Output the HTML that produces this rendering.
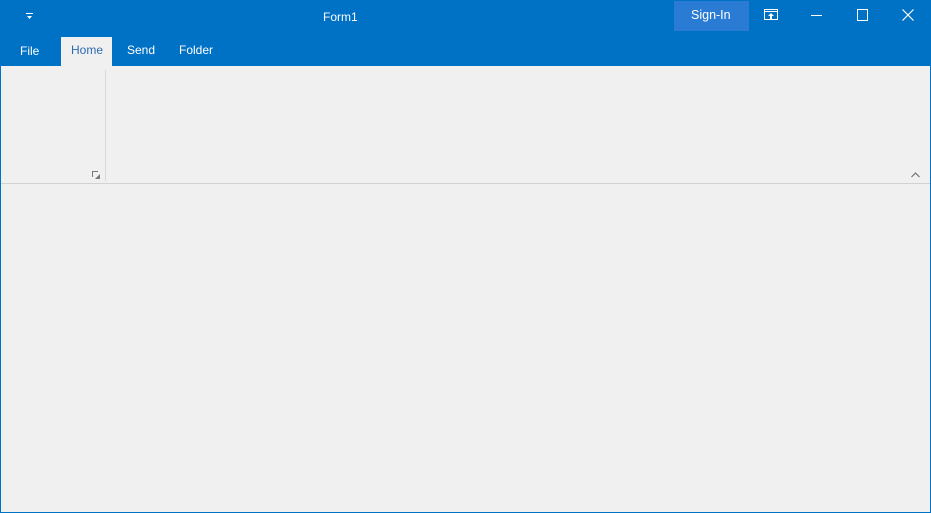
<!DOCTYPE html><html><head><style>
body{margin:0;width:931px;height:513px;overflow:hidden;background:#f0f0f0;font-family:"Segoe UI","Liberation Sans",sans-serif;position:relative}
.t{position:absolute;left:0;top:0;width:931px;height:66px;background:#0072c6;color:#fff}
.a{position:absolute;font-size:12px}
</style></head><body>
<div class="t">
<svg style="position:absolute;left:26px;top:12px" width="8" height="8"><rect x="0" y="1" width="7" height="1" fill="#fff"/><path d="M1 4h5l-2.5 3z" fill="#fff"/></svg>
<div class="a" style="left:323px;top:10px">Form1</div>
<div style="position:absolute;left:674px;top:1px;width:75px;height:30px;background:#2a7bd3"></div>
<div class="a" style="left:691px;top:8px;font-size:12.5px">Sign-In</div>
<svg style="position:absolute;left:764px;top:9px" width="15" height="12"><rect x="0.5" y="0.5" width="13" height="10" fill="none" stroke="#fff"/><line x1="1" y1="2.5" x2="13" y2="2.5" stroke="#fff"/><path d="M7 4l-3 3h2v3h2v-3h2z" fill="#fff"/></svg>
<div style="position:absolute;left:811px;top:15px;width:11px;height:1px;background:#fff"></div>
<div style="position:absolute;left:857px;top:9px;width:9px;height:10px;border:1px solid #fff"></div>
<svg style="position:absolute;left:902px;top:9px" width="12" height="12"><path d="M0.5 0.5L11.5 11.5M11.5 0.5L0.5 11.5" stroke="#fff" stroke-width="1.2"/></svg>
<div class="a" style="left:20px;top:44px">File</div>
<div style="position:absolute;left:61px;top:37px;width:51px;height:29px;background:#f0f0f0"></div>
<div class="a" style="left:71px;top:43px;color:#2b6cb0">Home</div>
<div class="a" style="left:127px;top:43px">Send</div>
<div class="a" style="left:179px;top:43px">Folder</div>
</div>
<div style="position:absolute;left:105px;top:70px;width:1px;height:111px;background:#d8d8d8"></div>
<svg style="position:absolute;left:92px;top:171px" width="9" height="9"><path d="M0.5 6V0.5H6" fill="none" stroke="#777"/><path d="M3 8h5V3z" fill="#777"/></svg>
<svg style="position:absolute;left:911px;top:172px" width="9" height="6"><path d="M0.5 5L4.5 1L8.5 5" fill="none" stroke="#666"/></svg>
<div style="position:absolute;left:0;top:183px;width:931px;height:1px;background:#d2d2d2"></div>
<div style="position:absolute;left:0;top:66px;width:1px;height:447px;background:#0072c6"></div>
<div style="position:absolute;right:0;top:66px;width:1px;height:447px;background:#0072c6"></div>
<div style="position:absolute;left:0;bottom:0;width:931px;height:1px;background:#0072c6"></div>
</body></html>
